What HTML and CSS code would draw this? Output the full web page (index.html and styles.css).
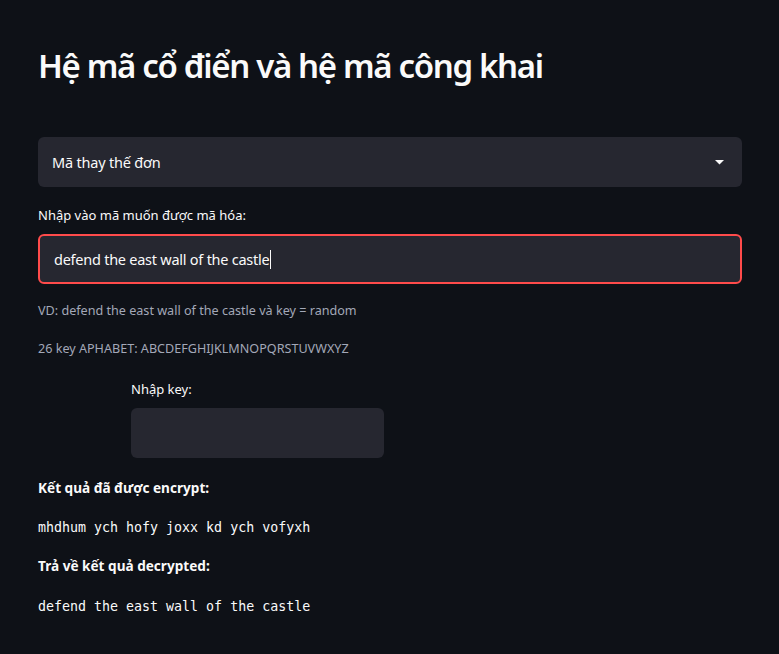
FILE: index.html
```html
<!DOCTYPE html>
<html>
<head>
<meta charset="utf-8">
<link rel="stylesheet" href="styles.css">
</head>
<body>
<main class="main">
  <h1 class="title">Hệ mã cổ điển và hệ mã công khai</h1>
  <div class="select">
    <span class="select-value">Mã thay thế đơn</span>
    <svg class="select-arrow" width="9" height="5" viewBox="0 0 9 5"><path d="M0 0h9L4.5 4.5z" fill="#fafafa"/></svg>
  </div>
  <label class="label">Nhập vào mã muốn được mã hóa:</label>
  <div class="input input-focus"><span class="input-text">defend the east wall of the castle</span><span class="caret"></span></div>
  <p class="hint hint-first">VD: defend the east wall of the castle và key = random</p>
  <p class="hint">26 key APHABET: ABCDEFGHIJKLMNOPQRSTUVWXYZ</p>
  <div class="key-col">
    <label class="label label-key">Nhập key:</label>
    <div class="input input-key"></div>
  </div>
  <p class="result-title">Kết quả đã được encrypt:</p>
  <p class="mono">mhdhum ych hofy joxx kd ych vofyxh</p>
  <p class="result-title">Trả về kết quả decrypted:</p>
  <p class="mono mono-last">defend the east wall of the castle</p>
</main>
</body>
</html>
```
FILE: styles.css
```css
html, body {
  margin: 0;
  padding: 0;
  background: #0e1117;
  color: #fafafa;
  font-family: "Noto Sans", "Open Sans", sans-serif;
}
.main {
  width: 704px;
  padding: 42px 0 0 38px;
}
.title {
  margin: 0;
  font-size: 33px;
  font-weight: 600;
  line-height: 48px;
  letter-spacing: -1.35px;
}
.select {
  margin-top: 47px;
  height: 50px;
  background: #262730;
  border-radius: 6px;
  display: flex;
  align-items: center;
  justify-content: space-between;
  padding: 0 18px 0 14px;
  box-sizing: border-box;
}
.select-value {
  font-size: 14.5px;
  letter-spacing: -0.2px;
}
.select-arrow {
  display: block;
}
.label {
  display: block;
  margin-top: 19px;
  font-size: 13px;
  line-height: 18px;
}
.input {
  margin-top: 10px;
  height: 50px;
  background: #262730;
  border-radius: 6px;
  box-sizing: border-box;
  display: flex;
  align-items: center;
}
.input-focus {
  border: 2px solid #ff4b4b;
  padding-left: 14px;
}
.input-text {
  font-size: 14.5px;
  letter-spacing: -0.25px;
}
.caret {
  width: 1px;
  height: 19px;
  background: #fafafa;
  margin-left: 1px;
}
.hint {
  margin: 0;
  font-size: 12.6px;
  line-height: 18px;
  color: #a3a8b8;
}
.hint-first {
  margin-top: 18px;
}
.hint + .hint {
  margin-top: 20px;
}
.key-col {
  margin-left: 93px;
  width: 253px;
}
.label-key {
  margin-top: 22px;
}
.input-key {
  margin-top: 10px;
}
.result-title {
  margin: 21px 0 0;
  font-size: 13.6px;
  font-weight: 700;
  line-height: 18px;
}
.mono {
  margin: 22px 0 0;
  font-family: "DejaVu Sans Mono", "Liberation Mono", monospace;
  font-size: 13.3px;
  line-height: 18px;
}
.mono + .result-title {
  margin-top: 20px;
}
.mono-last {
  margin-top: 23px;
}
```
